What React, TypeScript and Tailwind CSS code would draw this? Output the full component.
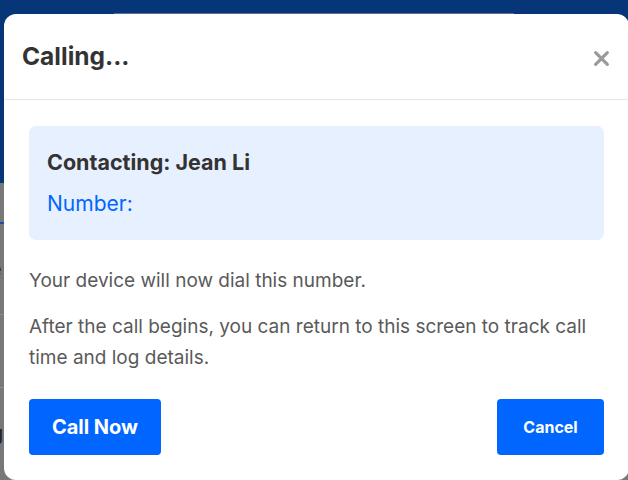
import React from "react";

// Modal "Calling..." sobre a página escurecida pelo overlay.
export default function App() {
  return (
    <div className="relative h-[480px] w-[628px] overflow-hidden bg-[#787878] font-['Inter',sans-serif]">
      {/* página por trás do overlay */}
      <div className="h-[183px] bg-[#073678]">
        <div className="mx-auto h-[14px] w-[400px] border-b border-[#5a6f93]" />
      </div>
      <div className="h-[41px] border-b-2 border-[#1c4fa0]" />
      <div className="flex h-[91px] items-center border-b border-[#8c8c8c]">
        <span className="-ml-[10px] text-[20px] text-[#222]">e</span>
      </div>
      <div className="h-[73px] border-b border-[#8c8c8c]" />
      <div className="flex h-[60px] items-end">
        <span className="-ml-[9px] text-[20px] text-[#222]">g</span>
      </div>

      {/* modal */}
      <div className="absolute left-[4px] top-[14px] flex h-[466px] w-[625px] flex-col rounded-[12px] bg-white">
        <div className="flex h-[86px] items-center justify-between border-b border-[#e6e6e6] pl-[18px] pr-[19px]">
          <h1 className="text-[24.5px] font-bold text-[#333]">Calling...</h1>
          <svg width="17" height="17" viewBox="0 0 16 16" className="mt-[4px]">
            <path d="M2.5 2.5 L13.5 13.5 M13.5 2.5 L2.5 13.5" stroke="#9a9a9a" strokeWidth="3" strokeLinecap="round" />
          </svg>
        </div>

        <div className="flex flex-1 flex-col px-[25px] pt-[26px]">
          <div className="flex h-[114px] flex-col rounded-[7px] bg-[#e7f0fe] px-[18px] pt-[22px]">
            <div className="text-[21.5px] font-bold leading-[28px] text-[#333]">Contacting: Jean Li</div>
            <div className="mt-[14px] text-[21px] leading-[28px] text-[#0066ff]">Number:</div>
          </div>

          <p className="mt-[25px] text-[19px] leading-[31px] text-[#5a5a5a]">Your device will now dial this number.</p>
          <p className="mt-[15px] text-[19px] leading-[31px] text-[#5a5a5a]">
            After the call begins, you can return to this screen to track call time and log details.
          </p>

          <div className="mt-[26px] flex items-center justify-between">
            <button className="h-[56px] w-[132px] rounded-[4px] bg-[#0066ff] text-[20px] font-bold text-white">
              Call Now
            </button>
            <button className="h-[56px] w-[107px] rounded-[4px] bg-[#0066ff] text-[16px] font-bold text-white">
              Cancel
            </button>
          </div>
        </div>
      </div>
    </div>
  );
}
